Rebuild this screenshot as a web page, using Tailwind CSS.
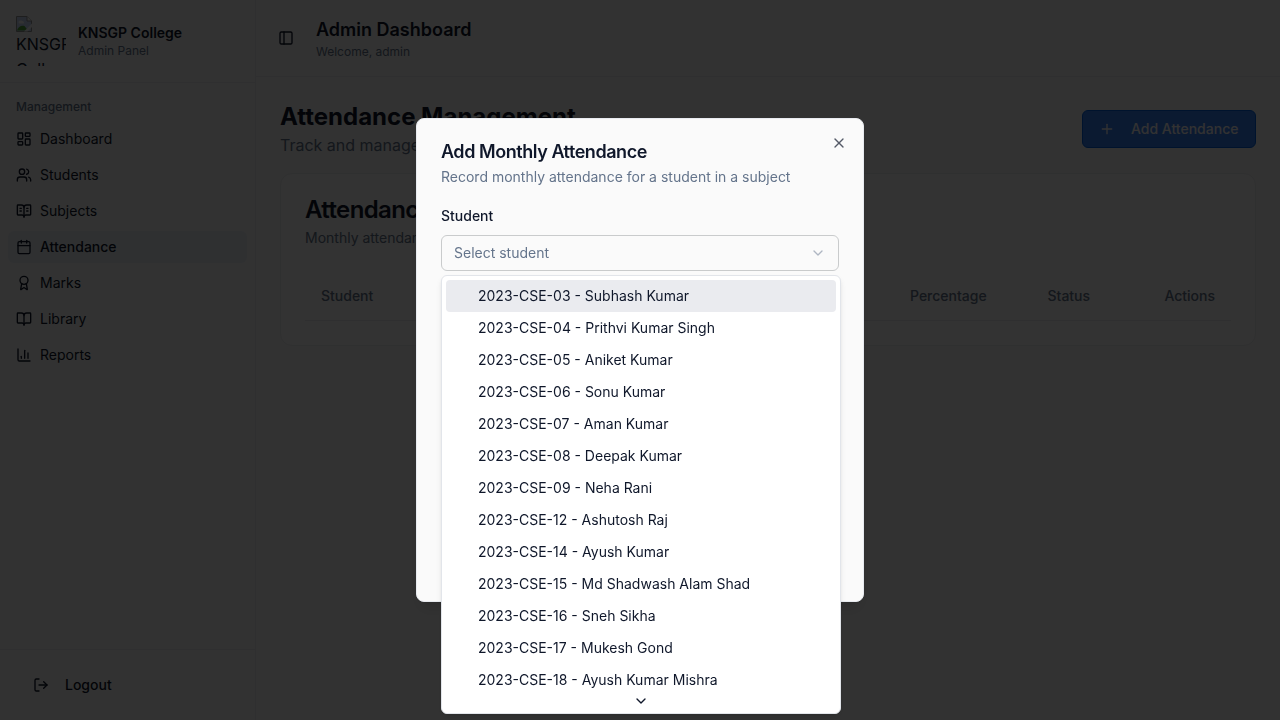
<!DOCTYPE html>
<html lang="en">
<head>
<meta charset="utf-8">
<title>Admin Dashboard</title>
<script src="https://cdn.jsdelivr.net/npm/@tailwindcss/browser@4"></script>
</head>
<body class="h-[720px] overflow-hidden bg-[#fafafa] font-['Inter',sans-serif] text-[#0f172a]">
<div class="flex h-[720px] w-full">
  <aside class="flex w-64 shrink-0 flex-col border-r border-[#e8ebf0] bg-[#fafafa]">
    <div class="flex h-[83px] items-center gap-3 border-b border-[#e8ebf0] px-4">
      <div class="h-[50px] w-[50px] overflow-hidden text-base leading-6">
        <svg class="block h-4 w-4" viewBox="0 0 16 16"><path d="M.5.5H11L15.500 5V15.500H.5Z" fill="#c5d6f6" stroke="#969696"/><path d="M11 .5V5H15.500" fill="#fff" stroke="#969696"/><path d="M2.500 6.500C2.500 4.500 5 4 6 5C8 5 8.500 7 7.500 7.500H3Z" fill="#fff"/><path d="M1 14.500C2 10 6 9 8.500 10L12 14.500Z" fill="#52a63b"/><path d="M8 15.500L16 7.500V11L11.500 15.500Z" fill="#fafafa"/></svg>
        <div class="w-[60px] whitespace-nowrap leading-6"><div>KNSGP</div><div class="mt-px">College</div></div>
      </div>
      <div>
        <div class="text-sm leading-5 font-semibold">KNSGP College</div>
        <div class="text-xs leading-4 text-[#64748b]">Admin Panel</div>
      </div>
    </div>
    <div class="flex flex-1 flex-col p-2">
      <div class="flex h-8 items-center px-2 text-xs font-medium text-[#64748b]">Management</div>
      <nav class="flex flex-col gap-1 text-sm">
        <a class="flex h-8 items-center gap-2 rounded-md px-2"><svg class="h-4 w-4" viewBox="0 0 24 24" fill="none" stroke="currentColor" stroke-width="2" stroke-linecap="round" stroke-linejoin="round"><rect width="7" height="9" x="3" y="3" rx="1"/><rect width="7" height="5" x="14" y="3" rx="1"/><rect width="7" height="9" x="14" y="12" rx="1"/><rect width="7" height="5" x="3" y="16" rx="1"/></svg>Dashboard</a>
        <a class="flex h-8 items-center gap-2 rounded-md px-2"><svg class="h-4 w-4" viewBox="0 0 24 24" fill="none" stroke="currentColor" stroke-width="2" stroke-linecap="round" stroke-linejoin="round"><path d="M16 21v-2a4 4 0 0 0-4-4H6a4 4 0 0 0-4 4v2"/><circle cx="9" cy="7" r="4"/><path d="M22 21v-2a4 4 0 0 0-3-3.870"/><path d="M16 3.130a4 4 0 0 1 0 7.750"/></svg>Students</a>
        <a class="flex h-8 items-center gap-2 rounded-md px-2"><svg class="h-4 w-4" viewBox="0 0 24 24" fill="none" stroke="currentColor" stroke-width="2" stroke-linecap="round" stroke-linejoin="round"><path d="M12 7v14"/><path d="M16 12h2"/><path d="M16 8h2"/><path d="M3 18a1 1 0 0 1-1-1V4a1 1 0 0 1 1-1h5a4 4 0 0 1 4 4 4 4 0 0 1 4-4h5a1 1 0 0 1 1 1v13a1 1 0 0 1-1 1h-6a3 3 0 0 0-3 3 3 3 0 0 0-3-3z"/><path d="M6 12h2"/><path d="M6 8h2"/></svg>Subjects</a>
        <a class="flex h-8 items-center gap-2 rounded-md bg-[#eaeff6] px-2 font-medium"><svg class="h-4 w-4" viewBox="0 0 24 24" fill="none" stroke="currentColor" stroke-width="2" stroke-linecap="round" stroke-linejoin="round"><path d="M8 2v4"/><path d="M16 2v4"/><rect width="18" height="18" x="3" y="4" rx="2"/><path d="M3 10h18"/></svg>Attendance</a>
        <a class="flex h-8 items-center gap-2 rounded-md px-2"><svg class="h-4 w-4" viewBox="0 0 24 24" fill="none" stroke="currentColor" stroke-width="2" stroke-linecap="round" stroke-linejoin="round"><path d="m15.477 12.890 1.515 8.526a.5.5 0 0 1-.81.470l-3.580-2.687a1 1 0 0 0-1.197 0l-3.586 2.686a.5.5 0 0 1-.81-.469l1.514-8.526"/><circle cx="12" cy="8" r="6"/></svg>Marks</a>
        <a class="flex h-8 items-center gap-2 rounded-md px-2"><svg class="h-4 w-4" viewBox="0 0 24 24" fill="none" stroke="currentColor" stroke-width="2" stroke-linecap="round" stroke-linejoin="round"><path d="M12 7v14"/><path d="M3 18a1 1 0 0 1-1-1V4a1 1 0 0 1 1-1h5a4 4 0 0 1 4 4 4 4 0 0 1 4-4h5a1 1 0 0 1 1 1v13a1 1 0 0 1-1 1h-6a3 3 0 0 0-3 3 3 3 0 0 0-3-3z"/></svg>Library</a>
        <a class="flex h-8 items-center gap-2 rounded-md px-2"><svg class="h-4 w-4" viewBox="0 0 24 24" fill="none" stroke="currentColor" stroke-width="2" stroke-linecap="round" stroke-linejoin="round"><path d="M3 3v16a2 2 0 0 0 2 2h16"/><path d="M18 17V9"/><path d="M13 17V5"/><path d="M8 17v-3"/></svg>Reports</a>
      </nav>
    </div>
    <div class="h-[71px] border-t border-[#e8ebf0] p-4">
      <div class="flex h-[38px] items-center gap-4 px-[17px] text-sm font-medium"><svg class="h-4 w-4" viewBox="0 0 24 24" fill="none" stroke="currentColor" stroke-width="2" stroke-linecap="round" stroke-linejoin="round"><path d="M9 21H5a2 2 0 0 1-2-2V5a2 2 0 0 1 2-2h4"/><path d="m16 17 5-5-5-5"/><path d="M21 12H9"/></svg>Logout</div>
    </div>
  </aside>
  <main class="flex min-w-0 flex-1 flex-col">
    <header class="flex h-[77px] items-center border-b border-[#e8ebf0] px-[22px]">
      <svg class="h-4 w-4" viewBox="0 0 24 24" fill="none" stroke="currentColor" stroke-width="2" stroke-linecap="round" stroke-linejoin="round"><rect width="18" height="18" x="3" y="3" rx="2"/><path d="M9 3v18"/></svg>
      <div class="ml-[22px]">
        <div class="text-lg leading-7 font-semibold">Admin Dashboard</div>
        <div class="text-xs leading-4 text-[#64748b]">Welcome, admin</div>
      </div>
    </header>
    <div class="flex flex-col gap-4 p-6">
      <div class="flex items-center justify-between">
        <div>
          <h1 class="text-2xl leading-8 font-bold">Attendance Management</h1>
          <p class="text-base leading-6 text-[#64748b]">Track and manage student attendance</p>
        </div>
        <div class="flex h-[38px] w-[174px] items-center rounded-md border border-[#0062e0] bg-[#3b82f6] px-4 text-sm font-medium text-[#fafafa]"><svg class="mr-4 h-4 w-4" viewBox="0 0 24 24" fill="none" stroke="currentColor" stroke-width="2" stroke-linecap="round"><path d="M5 12h14"/><path d="M12 5v14"/></svg>Add Attendance</div>
      </div>
      <section class="rounded-xl border border-[#eceef1] bg-[#fcfcfc] p-6">
        <h2 class="text-2xl leading-none font-semibold tracking-tight">Attendance Records</h2>
        <p class="mt-1.5 text-sm leading-5 text-[#64748b]">Monthly attendance records for all students</p>
        <div class="mt-6 flex h-[49px] items-center border-b border-[#e8ebf0] px-4 text-sm font-medium text-[#64748b]">
          <span class="w-[589px]">Student</span><span class="w-[137.5px]">Percentage</span><span>Status</span><span class="ml-auto">Actions</span>
        </div>
      </section>
    </div>
  </main>
</div>
<div class="fixed inset-0 bg-black/80"></div>
<div class="fixed top-[118px] left-[416px] h-[484px] w-[448px] rounded-lg border border-[#e8ebf0] bg-[#fafafa] p-6 shadow-lg">
  <svg class="absolute top-4 right-4 h-4 w-4 opacity-70" viewBox="0 0 24 24" fill="none" stroke="currentColor" stroke-width="2" stroke-linecap="round"><path d="M18 6 6 18"/><path d="m6 6 12 12"/></svg>
  <h2 class="text-lg leading-none font-semibold tracking-tight">Add Monthly Attendance</h2>
  <p class="mt-1.5 text-sm leading-5 text-[#64748b]">Record monthly attendance for a student in a subject</p>
  <div class="mt-[19px] text-sm leading-5 font-medium">Student</div>
  <div class="mt-[9px] flex h-9 items-center justify-between rounded-md border border-[#c9cbcc] px-3 text-sm text-[#64748b]">Select student<svg class="h-4 w-4 opacity-50" viewBox="0 0 24 24" fill="none" stroke="currentColor" stroke-width="2" stroke-linecap="round" stroke-linejoin="round"><path d="m6 9 6 6 6-6"/></svg></div>
</div>
<div class="fixed top-[275px] left-[441px] flex h-[439px] w-[400px] flex-col rounded-md border border-[#e2e5ea] bg-white shadow-md">
  <div class="h-[413px] overflow-hidden p-1 text-sm">
    <div class="flex h-8 items-center rounded-sm bg-[#eaebef] pl-8">2023-CSE-03 - Subhash Kumar</div>
    <div class="flex h-8 items-center pl-8">2023-CSE-04 - Prithvi Kumar Singh</div>
    <div class="flex h-8 items-center pl-8">2023-CSE-05 - Aniket Kumar</div>
    <div class="flex h-8 items-center pl-8">2023-CSE-06 - Sonu Kumar</div>
    <div class="flex h-8 items-center pl-8">2023-CSE-07 - Aman Kumar</div>
    <div class="flex h-8 items-center pl-8">2023-CSE-08 - Deepak Kumar</div>
    <div class="flex h-8 items-center pl-8">2023-CSE-09 - Neha Rani</div>
    <div class="flex h-8 items-center pl-8">2023-CSE-12 - Ashutosh Raj</div>
    <div class="flex h-8 items-center pl-8">2023-CSE-14 - Ayush Kumar</div>
    <div class="flex h-8 items-center pl-8">2023-CSE-15 - Md Shadwash Alam Shad</div>
    <div class="flex h-8 items-center pl-8">2023-CSE-16 - Sneh Sikha</div>
    <div class="flex h-8 items-center pl-8">2023-CSE-17 - Mukesh Gond</div>
    <div class="flex h-8 items-center pl-8">2023-CSE-18 - Ayush Kumar Mishra</div>
  </div>
  <div class="flex h-6 items-center justify-center"><svg class="h-4 w-4" viewBox="0 0 24 24" fill="none" stroke="currentColor" stroke-width="2" stroke-linecap="round" stroke-linejoin="round"><path d="m6 9 6 6 6-6"/></svg></div>
</div>
</body>
</html>
